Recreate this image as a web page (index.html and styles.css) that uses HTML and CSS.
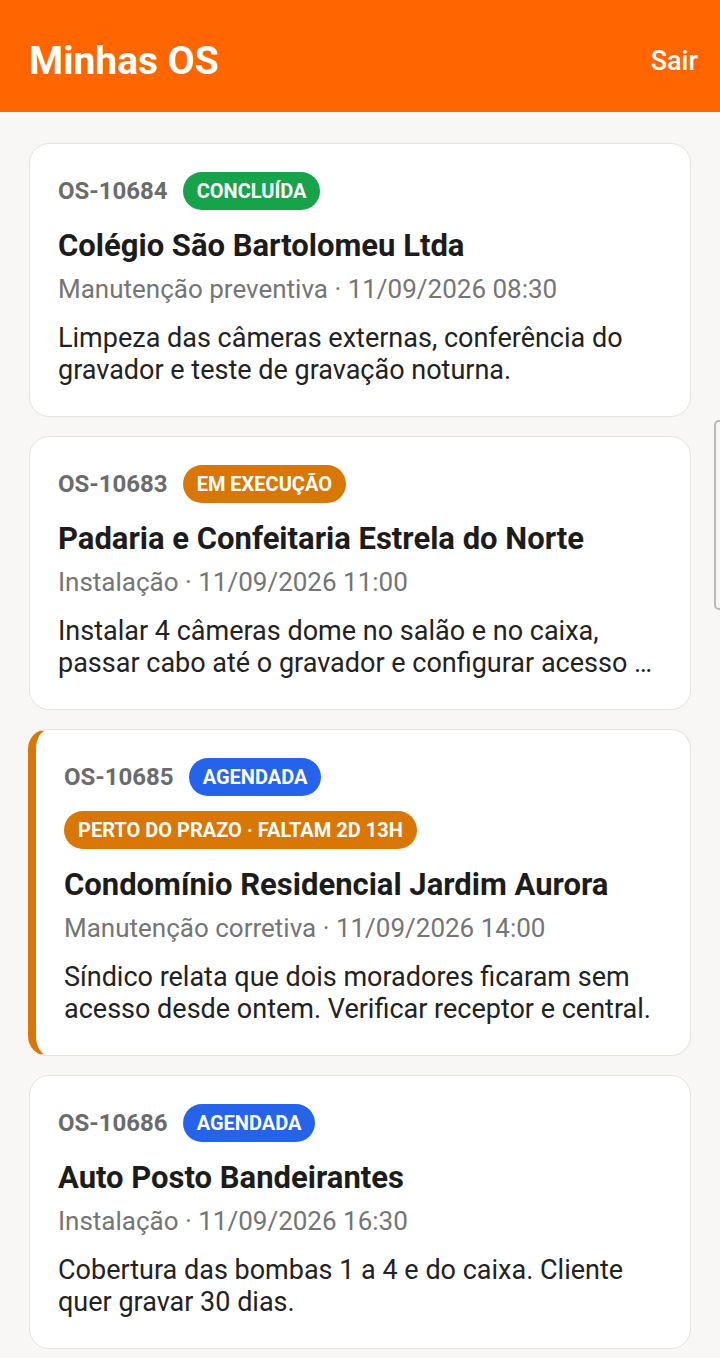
FILE: index.html
```html
<!DOCTYPE html>
<html lang="pt-BR">
  <head>
    <meta name="viewport" content="width=device-width, initial-scale=1.0" />
    <title>Minhas OS</title>
    <link rel="stylesheet" href="styles.css">
  </head>
  <body>
    <header class="topbar">
      <h1>Minhas OS</h1>
      <button class="logout">Sair</button>
    </header>

    <main class="list">
      <article class="card">
        <div class="card-head">
          <span class="os-num">OS-10684</span>
          <span class="badge done">Concluída</span>
        </div>
        <h2>Colégio São Bartolomeu Ltda</h2>
        <p class="meta">Manutenção preventiva · 11/09/2026 08:30</p>
        <p class="desc">Limpeza das câmeras externas, conferência do gravador e teste de gravação noturna.</p>
      </article>

      <article class="card">
        <div class="card-head">
          <span class="os-num">OS-10683</span>
          <span class="badge running">Em execução</span>
        </div>
        <h2>Padaria e Confeitaria Estrela do Norte</h2>
        <p class="meta">Instalação · 11/09/2026 11:00</p>
        <p class="desc">Instalar 4 câmeras dome no salão e no caixa, passar cabo até o gravador e configurar acesso …</p>
      </article>

      <article class="card urgent">
        <div class="card-head">
          <span class="os-num">OS-10685</span>
          <span class="badge scheduled">Agendada</span>
        </div>
        <div class="deadline">
          <span class="badge running">Perto do prazo · faltam 2d 13h</span>
        </div>
        <h2>Condomínio Residencial Jardim Aurora</h2>
        <p class="meta">Manutenção corretiva · 11/09/2026 14:00</p>
        <p class="desc">Síndico relata que dois moradores ficaram sem acesso desde ontem. Verificar receptor e central.</p>
      </article>

      <article class="card">
        <div class="card-head">
          <span class="os-num">OS-10686</span>
          <span class="badge scheduled">Agendada</span>
        </div>
        <h2>Auto Posto Bandeirantes</h2>
        <p class="meta">Instalação · 11/09/2026 16:30</p>
        <p class="desc">Cobertura das bombas 1 a 4 e do caixa. Cliente quer gravar 30 dias.</p>
      </article>
    </main>

    <div class="scroll-thumb"></div>
  </body>
</html>
```

FILE: styles.css
```css
* {
  padding: 0;
  margin: 0;
  box-sizing: border-box;
  font-family: "Roboto", "Noto Sans", sans-serif;
}
body {
  background-color: #f8f7f5;
}
.topbar {
  height: 112px;
  background-color: #ff6600;
  display: flex;
  align-items: center;
  justify-content: space-between;
  padding: 10px 22px 0 29px;
}
.topbar h1 {
  color: #ffffff;
  font-size: 39px;
  font-weight: 700;
}
.logout {
  background: none;
  border: none;
  color: #ffffff;
  font-size: 27px;
  font-weight: 500;
}
.list {
  display: flex;
  flex-direction: column;
  gap: 19px;
  padding: 31px 29px 40px;
}
.card {
  background-color: #ffffff;
  border: 1px solid #e6e2dc;
  border-radius: 20px;
  padding: 28px 28px 30px;
}
.card.urgent {
  border-left: 8px solid #d97706;
  margin-left: -1px;
}
.card-head {
  display: flex;
  align-items: center;
  gap: 15px;
  height: 38px;
}
.os-num {
  color: #6b6b6b;
  font-size: 24px;
  font-weight: 700;
}
.badge {
  display: inline-flex;
  align-items: center;
  height: 38px;
  padding: 0 14px;
  border-radius: 19px;
  color: #ffffff;
  font-size: 20px;
  font-weight: 700;
  text-transform: uppercase;
}
.badge.done {
  background-color: #16a34a;
}
.badge.running {
  background-color: #d97706;
}
.badge.scheduled {
  background-color: #2563eb;
}
.deadline {
  margin-top: 15px;
  display: flex;
}
.card h2 {
  margin-top: 18px;
  color: #1c1c1c;
  font-size: 31px;
  font-weight: 700;
  line-height: 36px;
}
.meta {
  margin-top: 10px;
  color: #757575;
  font-size: 26px;
  line-height: 30px;
}
.desc {
  margin-top: 18px;
  color: #222222;
  font-size: 27px;
  line-height: 32px;
  display: -webkit-box;
  -webkit-box-orient: vertical;
  -webkit-line-clamp: 2;
  overflow: hidden;
}
.scroll-thumb {
  position: fixed;
  top: 420px;
  right: -4px;
  width: 10px;
  height: 190px;
  border: 2px solid #b9b9b9;
  border-radius: 5px;
}
```
